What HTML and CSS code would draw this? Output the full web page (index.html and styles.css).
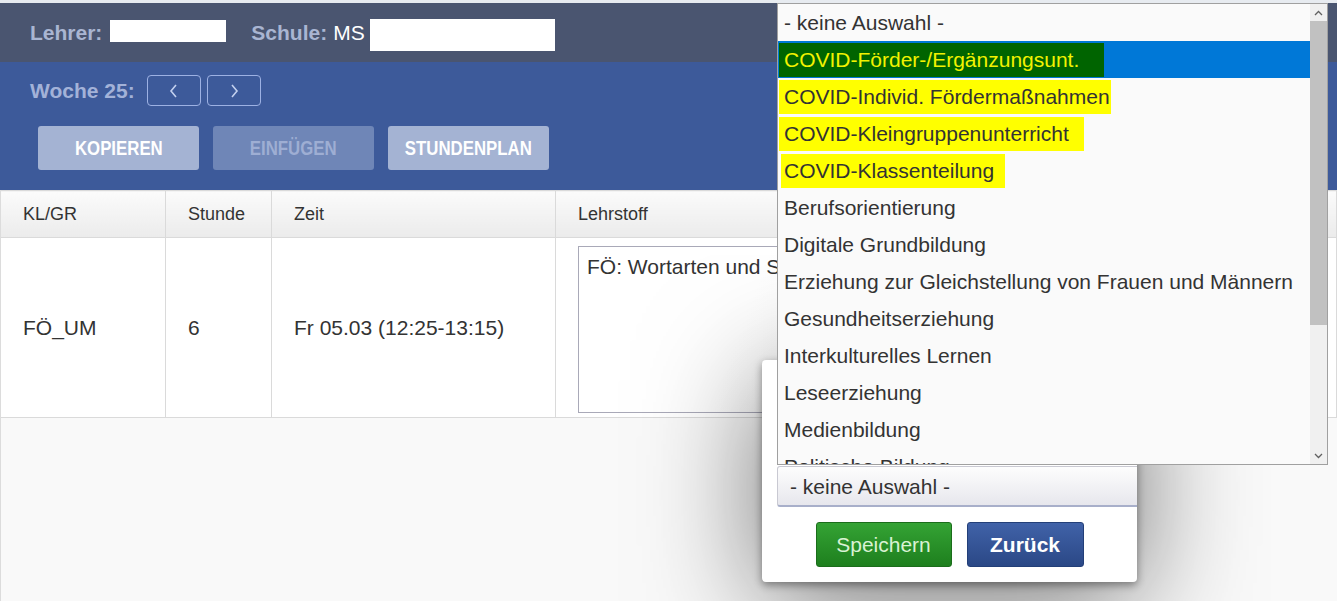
FILE: index.html
```html
<!DOCTYPE html>
<html>
<head>
  <meta charset="UTF-8">
  <title>Stundenplan | Lehrstoff</title>
  <link rel="stylesheet" href="styles.css">
</head>
<body>
  <div class="topline"></div>
  <header class="userbar">
    <span class="label">Lehrer:</span>
    <span class="redact redact-short"></span>
    <span class="label">Schule:</span>
    <span class="value">MS</span>
    <span class="redact redact-long"></span>
  </header>

  <section class="toolbar">
    <div class="week">
      <span class="label">Woche 25:</span>
      <button class="nav"><svg width="10" height="16" viewBox="0 0 10 16"><polyline points="7,2 2,8 7,14" fill="none" stroke="#c3d0ef" stroke-width="1.6"/></svg></button>
      <button class="nav"><svg width="10" height="16" viewBox="0 0 10 16"><polyline points="3,2 8,8 3,14" fill="none" stroke="#c3d0ef" stroke-width="1.6"/></svg></button>
    </div>
    <div class="actions">
      <button class="act"><span>KOPIEREN</span></button>
      <button class="act disabled"><span>EINFÜGEN</span></button>
      <button class="act"><span>STUNDENPLAN</span></button>
    </div>
  </section>

  <main class="content">
    <table class="plan">
      <thead>
        <tr>
          <th class="c-kl">KL/GR</th>
          <th class="c-std">Stunde</th>
          <th class="c-zeit">Zeit</th>
          <th>Lehrstoff</th>
        </tr>
      </thead>
      <tbody>
        <tr>
          <td>FÖ_UM</td>
          <td>6</td>
          <td>Fr 05.03 (12:25-13:15)</td>
          <td class="lehrstoff"><textarea>FÖ: Wortarten und Satzglieder</textarea></td>
        </tr>
      </tbody>
    </table>
  </main>

  <!-- dialog with the open select -->
  <div class="modal">
    <div class="modal-top"></div>
    <div class="fake-select">- keine Auswahl -</div>
    <div class="modal-buttons">
      <button class="btn btn-save">Speichern</button>
      <button class="btn btn-back">Zurück</button>
    </div>
  </div>

  <div class="listbox">
    <ul class="options">
      <li><span>- keine Auswahl -</span></li>
      <li class="selected"><span class="mark-green w-foerder">COVID-Förder-/Ergänzungsunt.</span></li>
      <li><span class="mark-yellow w-individ">COVID-Individ. Fördermaßnahmen</span></li>
      <li><span class="mark-yellow w-klein">COVID-Kleingruppenunterricht</span></li>
      <li><span class="mark-yellow w-klassen">COVID-Klassenteilung</span></li>
      <li><span>Berufsorientierung</span></li>
      <li><span>Digitale Grundbildung</span></li>
      <li><span>Erziehung zur Gleichstellung von Frauen und Männern</span></li>
      <li><span>Gesundheitserziehung</span></li>
      <li><span>Interkulturelles Lernen</span></li>
      <li><span>Leseerziehung</span></li>
      <li><span>Medienbildung</span></li>
      <li><span>Politische Bildung</span></li>
      <li><span>Sexualerziehung</span></li>
    </ul>
    <div class="scrollbar">
      <div class="arrow"><svg width="9" height="6" viewBox="0 0 9 6"><polyline points="1,5 4.5,1.5 8,5" fill="none" stroke="#606060" stroke-width="1.3"/></svg></div>
      <div class="thumb"></div>
      <div class="track"></div>
      <div class="arrow"><svg width="9" height="6" viewBox="0 0 9 6"><polyline points="1,1 4.5,4.5 8,1" fill="none" stroke="#606060" stroke-width="1.3"/></svg></div>
    </div>
  </div>
</body>
</html>
```

FILE: styles.css
```css
html,body {height: 100%}
body {margin: 0;background: #f9f9f9;color: #333;font-family: "Liberation Sans", Arial, sans-serif;overflow: hidden;position: relative;}

.topline {height: 3px;background: #e7ebf0;}

.userbar {height: 59px;background: #4a5570;display: flex;align-items: center;padding-left: 30px;}
.userbar .label {font-weight: bold;font-size: 21px;color: #a9b5d2;}
.userbar .value {font-size: 21px;color: #fff;margin-left: 6px;}
.redact {display: inline-block;background: #fff;}
.redact-short {width: 116px;height: 22px;margin: 0 25px 4px 8px;}
.redact-long {width: 185px;height: 32px;margin: 4px 0 0 5px;}

.toolbar {height: 128px;box-sizing: border-box;background: #3d5a9a;padding: 13px 0 0 30px;}
.week {display: flex;align-items: center;gap: 6px;}
.week .label {font-weight: bold;font-size: 21px;color: #a3b2d8;margin-right: 6px;}
.nav {width: 54px;height: 31px;padding: 0;border: 1px solid #9db1e3;border-radius: 4px;background: transparent;display: flex;align-items: center;justify-content: center;}
.actions {display: flex;gap: 14px;margin: 20px 0 0 8px;}
.act {width: 161px;height: 44px;padding: 0;border: 0;border-radius: 3px;background: #a4b3d3;color: #fff;font: bold 21px "Liberation Sans", Arial, sans-serif;}
.act span {display: inline-block;transform: scaleX(0.8);white-space: nowrap;}
.act.disabled {background: #6f86b7;color: #9eaed3;}

.content {min-height: 411px;border-left: 1px solid #dcdcdc;}
.plan {border-collapse: collapse;width: 100%;background: #fff;}
.plan th {height: 46px;padding: 0 22px;text-align: left;font-weight: normal;font-size: 18px;color: #333;background: linear-gradient(#fbfbfb, #ebebeb);border: 1px solid #dadada;}
.plan th:first-child, .plan td:first-child {border-left: 0;}
.plan th.c-kl {width: 120px;}
.plan th.c-std {width: 61px;}
.plan th.c-zeit {width: 239px;}
.plan td {padding: 0 22px;font-size: 21px;border: 1px solid #dadada;}
.plan td.lehrstoff {vertical-align: top;padding: 8px 22px 4px;}
.plan textarea {display: block;width: 420px;height: 167px;box-sizing: border-box;padding: 8px 8px 6px;border: 1px solid #a9a9b8;font: 21px "Liberation Sans", Arial, sans-serif;color: #333;resize: none;background: linear-gradient(110deg, #fff 40%, #f2f2f2);}

.modal {position: absolute;left: 762px;top: 360px;width: 375px;box-sizing: border-box;padding: 15px;background: #fff;border-radius: 4px;overflow: hidden;box-shadow: 0 3px 8px rgba(0,0,0,0.4), 0 20px 120px rgba(0,0,0,0.55);}
.modal-top {height: 91px;}
.fake-select {width: 390px;height: 41px;box-sizing: border-box;padding-left: 12px;line-height: 39px;font-size: 21px;color: #333;border: 1px solid #c9c9d2;border-bottom: 2px solid #a8afca;border-radius: 3px;background: linear-gradient(#fdfdfd, #e7e7ed);}
.modal-buttons {display: flex;justify-content: center;gap: 15px;margin-top: 15px;}
.btn {height: 45px;border-radius: 3px;font: 21px "Liberation Sans", Arial, sans-serif;padding: 0;}
.btn-save {width: 136px;background: linear-gradient(#34a334, #1e7f1e);border: 1px solid #1b6d1b;color: #d9f2d4;}
.btn-back {width: 117px;background: linear-gradient(#4062a8, #2b4886);border: 1px solid #233f78;color: #fff;font-weight: bold;}

.listbox {position: absolute;left: 777px;top: 3px;width: 551px;height: 462px;box-sizing: border-box;border: 1px solid #a0a0a0;background: #fafafa;display: flex;}
.options {flex: 1;margin: 0;padding: 0;list-style: none;overflow: hidden;}
.options li {height: 37px;display: flex;align-items: center;padding-left: 1px;font-size: 21px;color: #333;white-space: nowrap;}
.options li span {display: inline-block;box-sizing: border-box;padding: 0 6px 0 5px;line-height: 34px;}
.options li.selected {background: #0078d7;}
.mark-green {background: #006400;color: #f2f200;}
.mark-yellow {background: #ffff00;}
.w-foerder {width: 325px;}
.w-individ {width: 332px;}
.w-klein {width: 305px;}
.w-klassen {width: 224px;margin-left: 2px;padding-left: 3px !important;}
.scrollbar {width: 17px;background: #f0f0f0;display: flex;flex-direction: column;}
.arrow {height: 17px;display: flex;align-items: center;justify-content: center;}
.thumb {height: 304px;background: #c1c1c1;}
.track {flex: 1;}
```
